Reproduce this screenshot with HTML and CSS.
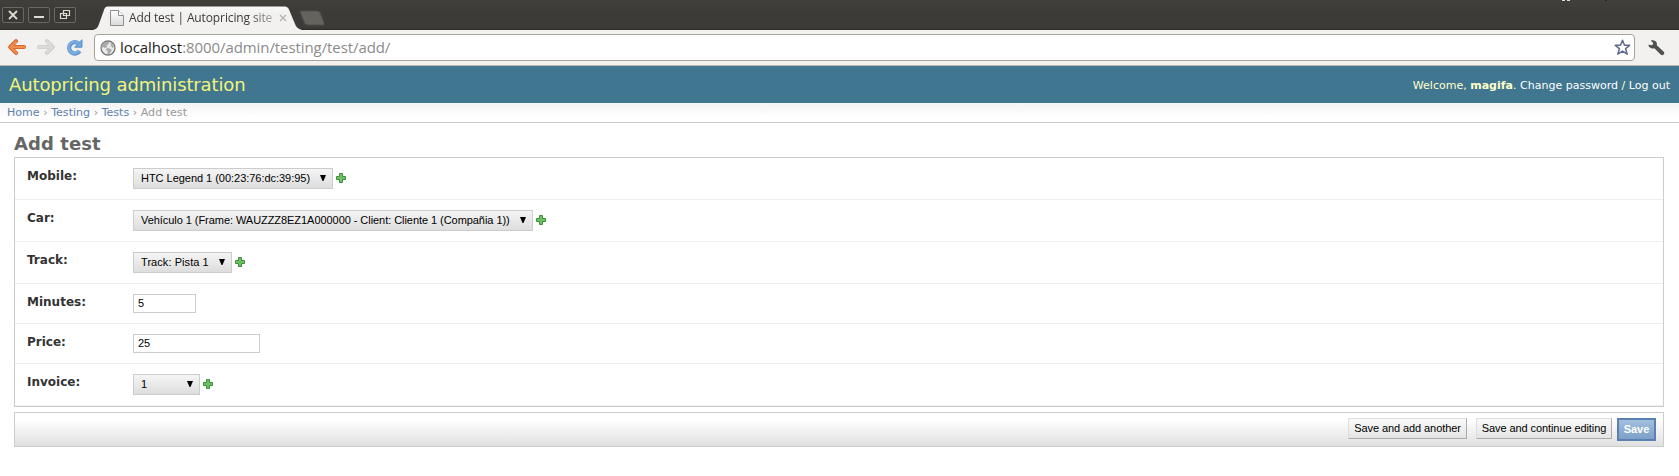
FILE: index.html
```
<!DOCTYPE html>
<html lang="en">
<head>
<meta charset="utf-8">
<title>Add test | Autopricing site admin</title>
<link rel="stylesheet" href="styles.css">
</head>
<body>
<svg width="0" height="0" class="defs">
  <defs>
    <linearGradient id="page" x1="0" y1="0" x2="0" y2="1"><stop offset="0" stop-color="#fff"/><stop offset="1" stop-color="#d9d9d9"/></linearGradient>
    <linearGradient id="tabfill" x1="0" y1="0" x2="0" y2="1"><stop offset="0" stop-color="#fafafa"/><stop offset=".3" stop-color="#f2f1f0"/></linearGradient>
    <symbol id="plus" viewBox="0 0 10 10"><path d="M3.5.5h3v3h3v3h-3v3h-3v-3h-3v-3h3z" fill="#6fbf69" stroke="#3c9238"/></symbol>
  </defs>
</svg>
<div class="titlebar">
  <div class="controls">
    <svg class="control" width="22" height="16" viewBox="0 0 22 16"><rect class="frame" x=".5" y=".5" width="21" height="15" rx="1.5"/><path class="mark" d="M7 4l8 8M15 4l-8 8"/></svg>
    <svg class="control" width="22" height="16" viewBox="0 0 22 16"><rect class="frame" x=".5" y=".5" width="21" height="15" rx="1.5"/><path class="mark bar" d="M6 10h10"/></svg>
    <svg class="control" width="22" height="16" viewBox="0 0 22 16"><rect class="frame" x=".5" y=".5" width="21" height="15" rx="1.5"/><path class="mark thin" d="M9.500 6.500v-3h6v5h-3M6.500 6.500h6v5h-6zM9.500 6.500v2h3"/></svg>
  </div>
  <div class="tab">
    <svg class="tab-shape" width="210" height="24" viewBox="0 0 210 24"><path d="M0 24c4-1 5-3 6-6L11 4C12 1 13 .5 16 .5H190c3 0 5 .500 6 3L202 18c1 3 3 5 7 6z" fill="url(#tabfill)"/></svg>
    <svg class="doc" width="14" height="16" viewBox="0 0 14 16"><path d="M.5.5h8l5 5v10H.5z" fill="url(#page)" stroke="#8e8e8e"/><path d="M8.500.5v5h5" fill="#fff" stroke="#8e8e8e"/></svg>
    <span class="tab-title">Add test | Autopricing site</span>
    <svg class="tab-close" width="8" height="8" viewBox="0 0 8 8"><path d="M1 1l6 6M7 1L1 7" stroke="#b5b4b1" stroke-width="1.400"/></svg>
  </div>
  <svg class="new-tab" width="27" height="16" viewBox="0 0 27 16"><path d="M4 1h15c2 0 3 1 3.500 2.500L26 13c.5 1.500 0 2-1 2H10c-2 0-3-1-3.500-2.500L2.500 3C2 1.500 2.500 1 4 1z" fill="#64635e" stroke="#504f4b"/></svg>
  <svg class="panel-specks" width="50" height="1" viewBox="0 0 50 1"><path d="M1 0h3v1H1zM6 0h3v1H6z" fill="#dfdbd2"/><path d="M44 0h2v1h-2z" fill="#252420"/></svg>
</div>
<div class="toolbar">
  <svg class="nav" width="18" height="16" viewBox="0 0 18 16"><path d="M2.200 8L8 2.200M2.200 8L8 13.800M3 8h13" fill="none" stroke="#d9662c" stroke-width="4" stroke-linecap="round" stroke-linejoin="round"/><path d="M2.500 8L8 2.500M2.500 8L8 13.500M3 8h13" fill="none" stroke="#ec8f4c" stroke-width="2.200" stroke-linecap="round"/></svg>
  <svg class="nav" width="18" height="16" viewBox="0 0 18 16"><path d="M15.800 8L10 2.200M15.800 8L10 13.800M15 8H2" fill="none" stroke="#cfcdca" stroke-width="4" stroke-linecap="round"/><path d="M15.500 8L10 2.500M15.500 8L10 13.500M15 8H2" fill="none" stroke="#dddbd8" stroke-width="2.400" stroke-linecap="round"/></svg>
  <svg class="nav" width="17" height="17" viewBox="0 0 17 17"><path d="M12.300 4.300A5.700 5.700 0 1 0 13.600 12" fill="none" stroke="#5b92cc" stroke-width="4.200"/><path d="M16 .7v7.500H8.600z" fill="#70a7dc" stroke="#5b92cc"/><path d="M12.300 4.300A5.700 5.700 0 1 0 13.300 11.600" fill="none" stroke="#7aaee0" stroke-width="2.500"/></svg>
  <div class="omnibox">
    <svg width="16" height="16" viewBox="0 0 16 16"><circle cx="8" cy="8" r="7" fill="#e9e9e9" stroke="#777" stroke-width="1.300"/><path d="M3 3.500C5 1.500 8 1.300 9 2L8.500 4 6.500 5.500 7.500 7 5 8 3 7 2 8C1.500 6.500 2 5 3 3.500zM7 8l3 .500 2 2-1.500 1.500L9 14.500 7.500 14 7.500 11 6 9.500zM10.500 3l2.500 1 1 3-1.500 1L11 6z" fill="#aaa"/></svg>
    <span class="url"><b>localhost</b>:8000/admin/testing/test/add/</span>
    <svg class="star" width="17" height="17" viewBox="0 0 17 17"><path d="M8.500 1.300l2 5h5.200l-4.100 3.400 1.600 5.500-4.700-3.100-4.700 3.100 1.600-5.500L1.300 6.300h5.200z" fill="#fff" stroke="#5f6b8c" stroke-width="1.500" stroke-linejoin="round"/></svg>
  </div>
  <svg class="wrench" width="17" height="16" viewBox="0 0 17 16"><path d="M2.800.6C5.500-.2 8.200.9 8.900 3.300L8.800 5.300l7 6.400c1.700 1.800-1 4.600-2.900 3L6.300 8.200C3.800 9 .8 7.900.3 4.700L4.200 5.300 5.300 3.300z" fill="#505050"/></svg>
</div>
<header class="header">
  <div class="site-name">Autopricing administration</div>
  <div class="user-tools">Welcome, <strong>magifa</strong>. <a>Change password</a> / <a>Log out</a></div>
</header>
<nav class="breadcrumbs"><a>Home</a> › <a>Testing</a> › <a>Tests</a> › Add test</nav>
<main class="content">
  <h1>Add test</h1>
  <div class="module">
    <div class="row"><label>Mobile:</label><div class="select mobile"><span>HTC Legend 1 (00:23:76:dc:39:95)</span><i></i></div><svg class="add"><use href="#plus"/></svg></div>
    <div class="row"><label>Car:</label><div class="select car"><span>Vehículo 1 (Frame: WAUZZZ8EZ1A000000 - Client: Cliente 1 (Compañia 1))</span><i></i></div><svg class="add"><use href="#plus"/></svg></div>
    <div class="row"><label>Track:</label><div class="select track"><span>Track: Pista 1</span><i></i></div><svg class="add"><use href="#plus"/></svg></div>
    <div class="row short"><label>Minutes:</label><div class="input minutes">5</div></div>
    <div class="row short"><label>Price:</label><div class="input price">25</div></div>
    <div class="row"><label>Invoice:</label><div class="select invoice"><span>1</span><i></i></div><svg class="add"><use href="#plus"/></svg></div>
  </div>
  <div class="submit-row">
    <div class="button another">Save and add another</div>
    <div class="button continue">Save and continue editing</div>
    <div class="button default">Save</div>
  </div>
</main>
</body>
</html>
```
FILE: styles.css
```
* { box-sizing: border-box; }
body { margin: 0; background: #fff; font-family: "DejaVu Sans", sans-serif; font-size: 12px; color: #333; overflow: hidden; }
svg { display: block; flex: none; }
.defs { position: absolute; }
.titlebar { height: 30px; display: flex; position: relative; background: linear-gradient(#403f3a, #3c3b37 40%, #3c3b37 93%, #2d2c29); }
.controls { display: flex; gap: 4px; padding: 7px 0 0 2px; width: 93px; flex: none; }
.frame { fill: #393834; stroke: #6b6964; }
.mark { fill: none; stroke: #dfdbd2; stroke-width: 1.8; }
.mark.bar { stroke-width: 2; }
.mark.thin { stroke-width: 1.2; }
.tab { width: 211px; height: 24px; margin-top: 6px; display: flex; position: relative; flex: none; padding-left: 17px; }
.tab-shape { position: absolute; left: 0; top: 0; }
.doc { position: relative; margin-top: 4px; }
.tab-title { position: relative; margin-left: 5px; width: 145px; font: 12px/23px "Open Sans", sans-serif; white-space: nowrap; color: #3c3b37; letter-spacing: -.12px; -webkit-mask-image: linear-gradient(90deg, #000 82%, rgba(0,0,0,.35)); mask-image: linear-gradient(90deg, #000 82%, rgba(0,0,0,.35)); }
.tab-close { position: relative; margin: 8px 0 0 5px; }
.new-tab { margin: 10px 0 0 -6px; }
.panel-specks { position: absolute; left: 1561px; top: 0; }
.toolbar { height: 36px; display: flex; align-items: flex-start; gap: 11px; padding: 4px 14px 0 8px; background: #f2f1f0; border-bottom: 1px solid #b8b6b3; }
.nav { margin-top: 5px; }
.omnibox { height: 27px; flex: 1; display: flex; align-items: center; padding: 0 3px 0 5px; background: #fff; border: 1px solid #a5a29c; border-radius: 4px; }
.url { flex: 1; margin-left: 4px; font: 15px/23px "Open Sans", sans-serif; letter-spacing: -.08px; color: #8b8b8b; white-space: nowrap; padding-bottom: 1px; }
.url b { font-weight: 400; color: #222; }
.wrench { margin: 6px 0 0 2px; }
.header { height: 37px; display: flex; justify-content: space-between; align-items: center; padding: 0 9px 0 9px; background: #417690; color: #ffc; }
.site-name { font-size: 18px; letter-spacing: -.13px; color: #f4f379; }
.user-tools { font-size: 11px; padding-top: 1px; letter-spacing: .01px; }
.user-tools a { color: #fff; }
.breadcrumbs { height: 20px; padding: 1px 7px; font-size: 11px; line-height: 17px; letter-spacing: .04px; color: #999; background: linear-gradient(#fff 0, #f4f4f4 1px, #fff 14px); border-bottom: 1px solid #ccc; }
.breadcrumbs a { color: #5b80b2; }
.content { padding: 10px 15px 0 14px; }
h1 { margin: 0; height: 24px; font-size: 18px; line-height: 22px; letter-spacing: .08px; color: #666; }
.module { border: 1px solid #ccc; }
.row { height: 42px; display: flex; align-items: flex-start; padding: 10px 12px 0; border-bottom: 1px solid #eee; }
.row.short { height: 40px; }
label { width: 106px; font-weight: 700; line-height: 16px; }
.select, .input, .button { font: 11px/18px "Liberation Sans", Arial, sans-serif; color: #000; white-space: nowrap; border: 1px solid #ccc; }
.select { height: 21px; display: flex; justify-content: space-between; padding: 0 6px 0 7px; background: linear-gradient(#f5f5f5, #ddd); }
.select i { width: 6px; height: 6px; margin-top: 6px; background: #000; clip-path: polygon(0 0, 100% 0, 58% 100%, 42% 100%); }
.mobile { width: 200px; letter-spacing: -.03px; }
.car { width: 400px; letter-spacing: -.055px; }
.track { width: 99px; letter-spacing: .07px; }
.invoice { width: 67px; }
.add { width: 10px; height: 10px; margin: 5px 0 0 3px; }
.input { height: 19px; line-height: 17px; padding-left: 4px; background: #fff; }
.minutes { width: 63px; }
.price { width: 127px; }
.submit-row { height: 35px; margin-top: 5px; display: flex; justify-content: flex-end; padding: 5px 7px; background: linear-gradient(#fff 20%, #e0e0e0); border: 1px solid #ccc; }
.button { height: 21px; text-align: center; letter-spacing: -.08px; background: linear-gradient(#fafafa, #e4e4e4); border-color: #ddd #aaa #aaa #ddd; }
.another { width: 119px; margin-right: 9px; }
.continue { width: 136px; margin-right: 5px; }
.default { width: 39px; height: 23px; letter-spacing: 0; color: #fff; font-weight: 700; border: 2px solid #5b80b2; background: linear-gradient(#a3bfdf, #7ca0c8); }
```
